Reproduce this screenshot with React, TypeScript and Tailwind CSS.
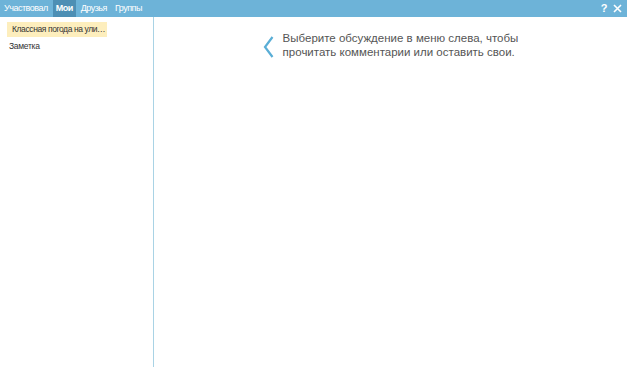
import React from 'react'

const tabs = ['Участвовал', 'Мои', 'Друзья', 'Группы']

export default function App() {
  return (
    <div
      className="flex h-[367px] w-[627px] flex-col bg-white"
      style={{ fontFamily: '"Liberation Sans", Arial, sans-serif' }}
    >
      <div className="flex h-[17px] items-stretch bg-[#6db3d8] text-[9px] tracking-[-0.5px] text-white">
        <div className="flex items-stretch gap-[2px] pl-[1px]">
          {tabs.map((t) => (
            <div
              key={t}
              className={`flex items-center px-[3px] ${t === 'Мои' ? 'bg-[#4d8fb4] font-bold' : ''}`}
            >
              {t}
            </div>
          ))}
        </div>
        <div className="ml-auto flex items-center gap-[6px] pr-[5px] text-[11px] font-bold">
          <span>?</span>
          <svg width="9" height="9" viewBox="0 0 9 9">
            <path d="M1 1 L8 8 M8 1 L1 8" stroke="white" strokeWidth="1.6" />
          </svg>
        </div>
      </div>
      <div className="flex flex-1">
        <div className="w-[154px] border-r border-[#a9d3e5] pt-[5px]">
          <div className="ml-[7px] flex h-[15px] w-[100px] items-center overflow-hidden whitespace-nowrap bg-[#fdeebd] pl-[5px] text-[8.5px] tracking-[-0.4px] text-[#333]">
            Классная погода на ули…
          </div>
          <div className="ml-[9px] mt-[3px] text-[8.5px] tracking-[-0.3px] text-[#333]">Заметка</div>
        </div>
        <div className="flex flex-1 justify-center pt-[14px]">
          <div className="flex items-start gap-[9px]">
            <svg width="11" height="22" viewBox="0 0 11 22" className="mt-[5px]">
              <path d="M9.5 1 L2 11 L9.5 21" fill="none" stroke="#5aaed6" strokeWidth="2.2" />
            </svg>
            <div className="text-[11.5px] leading-[14px] text-[#555]">
              Выберите обсуждение в меню слева, чтобы
              <br />
              прочитать комментарии или оставить свои.
            </div>
          </div>
        </div>
      </div>
    </div>
  )
}
